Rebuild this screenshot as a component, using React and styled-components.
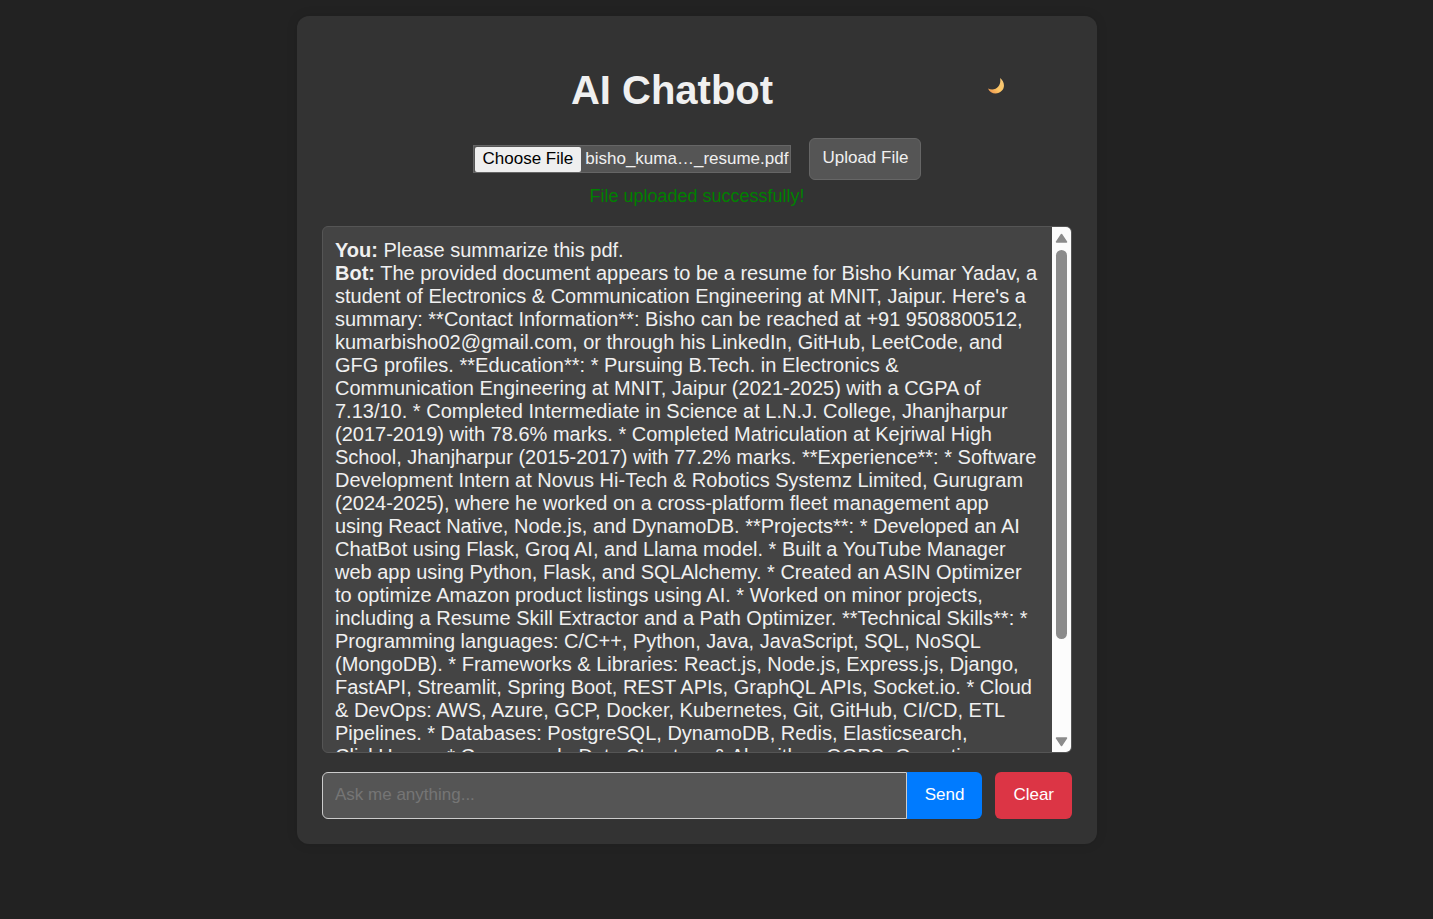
import React, { useState } from "react";
import styled, { createGlobalStyle } from "styled-components";

const GlobalStyle = createGlobalStyle`
  *, *::before, *::after { box-sizing: border-box; }
  body {
    margin: 0;
    background: #222;
    color: #f0f0f0;
    font-family: "Liberation Sans", Arial, sans-serif;
  }
`;

const Page = styled.div`
  display: flex;
  justify-content: center;
  padding: 16px 39px 16px 0;
`;

const Card = styled.main`
  width: 100%;
  max-width: 800px;
  padding: 49px 25px 25px;
  border-radius: 12px;
  background: #333;
  box-shadow: 0 0 12px rgba(0, 0, 0, 0.1);
`;

const Header = styled.header`
  display: flex;
  align-items: center;
  padding: 0 50px;
  margin-bottom: 23px;
`;

const Title = styled.h1`
  flex: 1;
  margin: 0;
  text-align: center;
  font-size: 40px;
  line-height: 50px;
`;

const ThemeButton = styled.button`
  display: flex;
  justify-content: center;
  width: 50px;
  padding: 0 2px 8px 0;
  border: 0;
  background: none;
  cursor: pointer;
`;

const UploadForm = styled.form`
  display: flex;
  justify-content: center;
  align-items: center;
  gap: 18px;
`;

const FilePicker = styled.label`
  position: relative;
  display: flex;
  align-items: center;
  gap: 4px;
  height: 28px;
  padding: 0 2px 0 1px;
  border: 1px solid #666;
  background: #555;
  font-size: 17px;
  white-space: nowrap;
  cursor: pointer;
`;

const FileInput = styled.input`
  position: absolute;
  inset: 0;
  width: 100%;
  height: 100%;
  opacity: 0;
  cursor: pointer;
`;

const FileButton = styled.span`
  padding: 0 8px 1px;
  border-radius: 2px;
  background: #efefef;
  color: #000;
  line-height: 24px;
`;

const Button = styled.button`
  padding: 0 ${(p) => p.$pad || 18}px 2px;
  height: ${(p) => p.$height || 47}px;
  border: ${(p) => (p.$outlined ? "1px solid #666" : "0")};
  border-radius: ${(p) => (p.$joined ? "0 6px 6px 0" : "6px")};
  background: ${(p) => p.$color};
  color: ${(p) => (p.$outlined ? "#f0f0f0" : "#fff")};
  font-family: inherit;
  font-size: 17px;
  cursor: pointer;
`;

const Status = styled.p`
  margin: 4px 0 18px;
  color: #008000;
  text-align: center;
  font-size: 18px;
  line-height: 24px;
`;

const ChatBox = styled.section`
  display: flex;
  height: 527px;
  border: 1px solid #555;
  border-radius: 6px;
  background: #444;
  overflow: hidden;
`;

const Messages = styled.div`
  flex: 1;
  min-width: 0;
  padding: 12px;
  overflow-y: auto;
  scrollbar-width: none;
  font-size: 20px;
  line-height: 23px;
`;

const Message = styled.div``;

const ScrollTrack = styled.div`
  display: flex;
  flex-direction: column;
  align-items: center;
  width: 19px;
  padding: 6px 0 5px;
  background: #fcfcfc;
`;

const ThumbLane = styled.div`
  flex: 1;
  width: 11px;
  padding: 7px 0;
`;

const Thumb = styled.div`
  height: 81%;
  border-radius: 6px;
  background: #8b8b8b;
`;

const AskForm = styled.form`
  display: flex;
  margin-top: 19px;
`;

const AskInput = styled.input`
  flex: 1;
  min-width: 0;
  height: 47px;
  padding: 0 12px 2px;
  border: 1px solid #ccc;
  border-radius: 6px 0 0 6px;
  background: #555;
  color: #f0f0f0;
  font-family: inherit;
  font-size: 17px;
  &::placeholder { color: #757575; }
`;

const ClearSlot = styled.div`
  margin-left: 13px;
`;

const Moon = () => (
  <svg width="18" height="18" viewBox="0 0 18 18" aria-hidden="true">
    <defs>
      <linearGradient id="moon" x1="1" y1="0" x2="0" y2="1">
        <stop offset="0" stopColor="#f5c77b" />
        <stop offset="0.55" stopColor="#fdc664" />
        <stop offset="1" stopColor="#e88a4c" />
      </linearGradient>
    </defs>
    <path
      d="M13 1 C17 4 18.5 9.500 15 13.500 C11 18 3.500 17.500 1 11.500 C5 13.500 9 12.500 11.300 9.500 C13.300 7 13.700 4 13 1Z"
      fill="url(#moon)"
    />
  </svg>
);

const Arrow = ({ down }) => (
  <svg width="13" height="10" viewBox="0 0 13 10" aria-hidden="true">
    <path
      d={down ? "M1.500 1H11.500L6.500 8.500Z" : "M1.500 9H11.500L6.500 1.500Z"}
      fill="#8b8b8b"
      stroke="#8b8b8b"
      strokeWidth="1.500"
      strokeLinejoin="round"
    />
  </svg>
);

const messages = [
  { from: "You", text: "Please summarize this pdf." },
  {
    from: "Bot",
    text:
      "The provided document appears to be a resume for Bisho Kumar Yadav, a student of Electronics & Communication Engineering at MNIT, Jaipur. Here's a summary: **Contact Information**: Bisho can be reached at +91 9508800512, kumarbisho02@gmail.com, or through his LinkedIn, GitHub, LeetCode, and GFG profiles. **Education**: * Pursuing B.Tech. in Electronics & Communication Engineering at MNIT, Jaipur (2021-2025) with a CGPA of 7.13/10. * Completed Intermediate in Science at L.N.J. College, Jhanjharpur (2017-2019) with 78.6% marks. * Completed Matriculation at Kejriwal High School, Jhanjharpur (2015-2017) with 77.2% marks. **Experience**: * Software Development Intern at Novus Hi-Tech & Robotics Systemz Limited, Gurugram (2024-2025), where he worked on a cross-platform fleet management app using React Native, Node.js, and DynamoDB. **Projects**: * Developed an AI ChatBot using Flask, Groq AI, and Llama model. * Built a YouTube Manager web app using Python, Flask, and SQLAlchemy. * Created an ASIN Optimizer to optimize Amazon product listings using AI. * Worked on minor projects, including a Resume Skill Extractor and a Path Optimizer. **Technical Skills**: * Programming languages: C/C++, Python, Java, JavaScript, SQL, NoSQL (MongoDB). * Frameworks & Libraries: React.js, Node.js, Express.js, Django, FastAPI, Streamlit, Spring Boot, REST APIs, GraphQL APIs, Socket.io. * Cloud & DevOps: AWS, Azure, GCP, Docker, Kubernetes, Git, GitHub, CI/CD, ETL Pipelines. * Databases: PostgreSQL, DynamoDB, Redis, Elasticsearch, ClickHouse. * Coursework: Data Structure & Algorithm, OOPS, Operating",
  },
];

export default function App() {
  const [question, setQuestion] = useState("");
  const stop = (e) => e.preventDefault();

  return (
    <Page>
      <GlobalStyle />
      <Card>
        <Header>
          <Title>AI Chatbot</Title>
          <ThemeButton type="button" aria-label="Toggle theme">
            <Moon />
          </ThemeButton>
        </Header>

        <UploadForm onSubmit={stop}>
          <FilePicker htmlFor="pdf">
            <FileInput id="pdf" type="file" accept="application/pdf" />
            <FileButton>Choose File</FileButton>
            <span>bisho_kuma…_resume.pdf</span>
          </FilePicker>
          <Button type="submit" $outlined $color="#555" $height={42} $pad={12}>
            Upload File
          </Button>
        </UploadForm>
        <Status role="status">File uploaded successfully!</Status>

        <ChatBox aria-label="Conversation">
          <Messages>
            {messages.map((m) => (
              <Message key={m.from}>
                <strong>{m.from}:</strong> {m.text}
              </Message>
            ))}
          </Messages>
          <ScrollTrack aria-hidden="true">
            <Arrow />
            <ThumbLane>
              <Thumb />
            </ThumbLane>
            <Arrow down />
          </ScrollTrack>
        </ChatBox>

        <AskForm onSubmit={stop}>
          <AskInput
            type="text"
            aria-label="Your question"
            placeholder="Ask me anything..."
            value={question}
            onChange={(e) => setQuestion(e.target.value)}
          />
          <Button type="submit" $joined $color="#007bff">Send</Button>
          <ClearSlot>
            <Button type="button" $color="#dc3545" onClick={() => setQuestion("")}>
              Clear
            </Button>
          </ClearSlot>
        </AskForm>
      </Card>
    </Page>
  );
}
